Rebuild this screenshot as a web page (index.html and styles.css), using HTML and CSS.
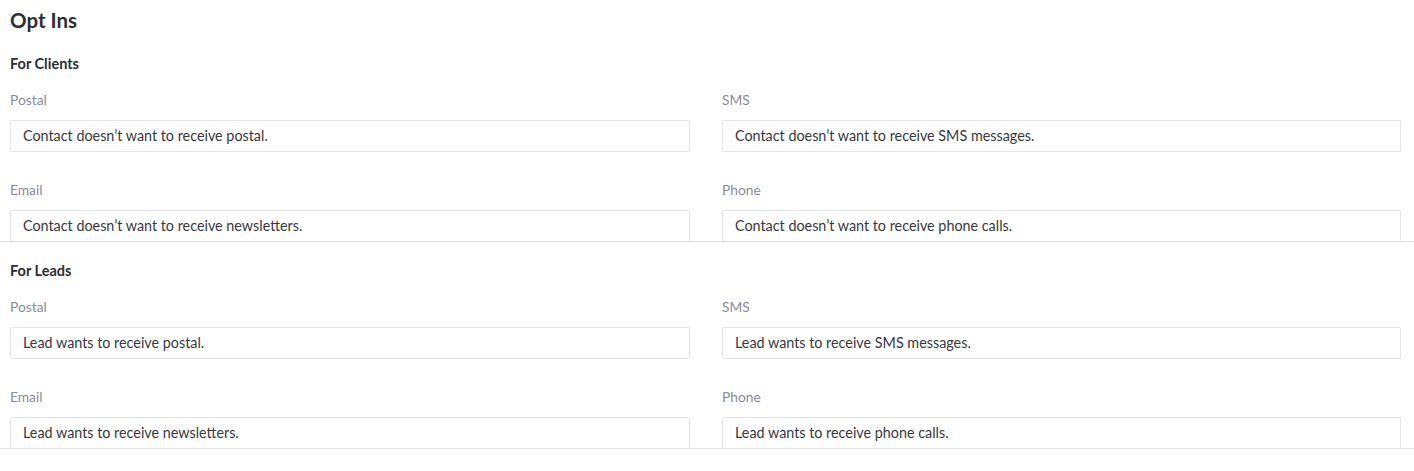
FILE: index.html
```html
<!DOCTYPE html>
<html lang="en">
<head>
<meta charset="utf-8">
<title>Opt Ins</title>
<link rel="stylesheet" href="styles.css">
</head>
<body>
<div class="page">
  <h1 class="title">Opt Ins</h1>
  <section class="group">
    <h2 class="group-title">For Clients</h2>
    <div class="grid">
      <div class="field">
        <div class="label">Postal</div>
        <div class="box">Contact doesn’t want to receive postal.</div>
      </div>
      <div class="field">
        <div class="label">SMS</div>
        <div class="box">Contact doesn’t want to receive SMS messages.</div>
      </div>
      <div class="field">
        <div class="label">Email</div>
        <div class="box">Contact doesn’t want to receive newsletters.</div>
      </div>
      <div class="field">
        <div class="label">Phone</div>
        <div class="box">Contact doesn’t want to receive phone calls.</div>
      </div>
    </div>
  </section>
  <section class="group">
    <h2 class="group-title">For Leads</h2>
    <div class="grid">
      <div class="field">
        <div class="label">Postal</div>
        <div class="box">Lead wants to receive postal.</div>
      </div>
      <div class="field">
        <div class="label">SMS</div>
        <div class="box">Lead wants to receive SMS messages.</div>
      </div>
      <div class="field">
        <div class="label">Email</div>
        <div class="box">Lead wants to receive newsletters.</div>
      </div>
      <div class="field">
        <div class="label">Phone</div>
        <div class="box">Lead wants to receive phone calls.</div>
      </div>
    </div>
  </section>
</div>
</body>
</html>
```

FILE: styles.css
```css
* { box-sizing: border-box; }
html, body {
  margin: 0;
  background: #ffffff;
}
body {
  font-family: "Lato", "Noto Sans", sans-serif;
  color: #33323a;
}
.page {
  padding-top: 8px;
}
.title {
  margin: 0;
  padding: 0 10px;
  font-size: 20.5px;
  font-weight: 700;
  line-height: 24px;
  color: #2f2e35;
}
.group {
  border-bottom: 1px solid #e6e6ea;
}
.group-title {
  margin: 0;
  padding: 0 10px;
  font-size: 14.5px;
  font-weight: 700;
  line-height: 18px;
  color: #2f2e35;
}
.page > .group:first-of-type .group-title {
  margin-top: 23px;
}
.group + .group .group-title {
  margin-top: 20px;
}
.grid {
  display: grid;
  grid-template-columns: 680px 679px;
  column-gap: 32px;
  row-gap: 30px;
  padding: 0 10px;
  margin-top: 18px;
}
.label {
  font-size: 13.8px;
  line-height: 18px;
  color: #8d8c99;
  margin-bottom: 11px;
}
.box {
  height: 32px;
  border: 1px solid #e6e6ea;
  border-radius: 2px;
  padding: 0 12px;
  font-size: 14.35px;
  line-height: 30px;
  color: #3a3942;
  margin-bottom: -1px;
}
```
